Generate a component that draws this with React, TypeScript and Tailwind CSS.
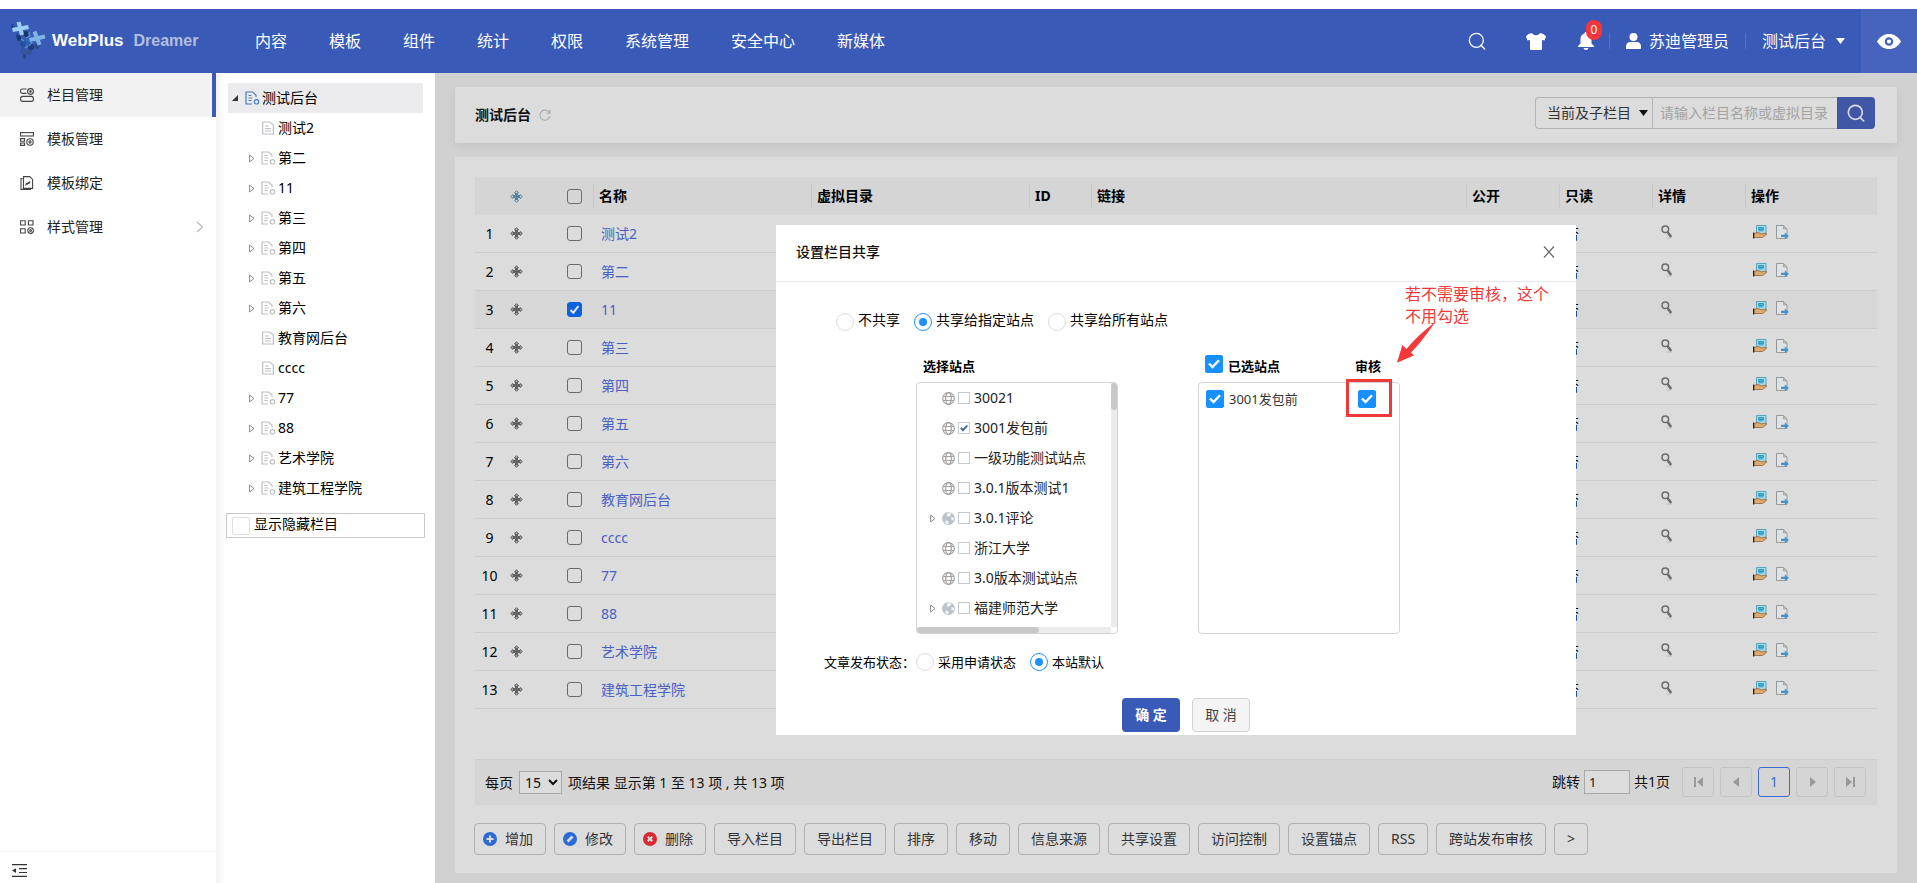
import React from 'react';

const navItems = ['内容', '模板', '组件', '统计', '权限', '系统管理', '安全中心', '新媒体'];

interface TreeItem {
  name: string;
  leaf?: boolean;
}

const columns: TreeItem[] = [
  { name: '测试2', leaf: true },
  { name: '第二' },
  { name: '11' },
  { name: '第三' },
  { name: '第四' },
  { name: '第五' },
  { name: '第六' },
  { name: '教育网后台', leaf: true },
  { name: 'cccc', leaf: true },
  { name: '77' },
  { name: '88' },
  { name: '艺术学院' },
  { name: '建筑工程学院' },
];

const sites = [
  { name: '30021' },
  { name: '3001发包前', checked: true },
  { name: '一级功能测试站点' },
  { name: '3.0.1版本测试1' },
  { name: '3.0.1评论', parent: true },
  { name: '浙江大学' },
  { name: '3.0版本测试站点' },
  { name: '福建师范大学', parent: true },
];

const actions = ['导入栏目', '导出栏目', '排序', '移动', '信息来源', '共享设置', '访问控制', '设置锚点', 'RSS', '跨站发布审核', '>'];

/* ---------- icons ---------- */

const Logo = () => (
  <svg width="36" height="40" viewBox="0 0 36 40" aria-hidden="true">
    <path d="M2 8l-1-4 3-1zM7 12l-1 4 4 1z" fill="#1c3f86" />
    <ellipse cx="9" cy="17" rx="2.200" ry="3.200" fill="#1b3a78" />
    <ellipse cx="16" cy="13" rx="2.500" ry="3" fill="#1a3568" />
    <ellipse cx="13" cy="23" rx="2.500" ry="3.500" fill="#23509a" />
    <ellipse cx="18" cy="20" rx="2.500" ry="3" fill="#2c63b4" />
    <ellipse cx="21" cy="26" rx="3" ry="3.200" fill="#1e3f7c" />
    <ellipse cx="27" cy="25" rx="2.500" ry="3" fill="#2b4c88" />
    <ellipse cx="13" cy="30" rx="2.500" ry="3" fill="#2f559d" />
    <ellipse cx="19" cy="31" rx="2.500" ry="2.600" fill="#36538f" />
    <ellipse cx="14.500" cy="35" rx="1.600" ry="2.500" fill="#31456f" />
    <path d="M19 11l1 4-4 2M11 18l3 2M22 21l-3 4M15 27l3-2" stroke="#5a94d8" strokeWidth="1.200" fill="none" />
    <path d="M2.500 9L18.500 6M8.500 1l3.500 13" stroke="#9fcef3" strokeWidth="4" />
    <path d="M19.500 19L35 15.500M24.500 10.500L29.500 24" stroke="#7fb4e6" strokeWidth="4" />
  </svg>
);

const SearchIcon = ({ size, width = 5 }: { size: number; width?: number }) => (
  <svg width={size} height={size} viewBox="0 0 54 54" fill="none" stroke="currentColor" strokeWidth={width} aria-hidden="true">
    <circle cx="25" cy="25" r="21" />
    <path d="M39 40l11 11" strokeLinecap="round" />
  </svg>
);

const ShirtIcon = () => (
  <svg width="20" height="17" viewBox="0 0 20 17" fill="currentColor" aria-hidden="true">
    <path d="M6 0c1 1.600 2.300 2.200 4 2.200S13 1.600 14 0c2.500.3 4.700 1.500 6 3.500L18.500 7.500 16 7v9q0 1-1 1H5q-1 0-1-1V7l-2.500.5L0 3.500C1.300 1.500 3.500.3 6 0z" />
  </svg>
);

const BellIcon = () => (
  <svg width="16" height="18" viewBox="0 0 16 18" fill="currentColor" aria-hidden="true">
    <path d="M8 0c1 0 1.500.6 1.500 1.500C12 2.200 13.500 4 13.500 7v4.500L16 14v1H0v-1l2.500-2.500V7c0-3 1.500-4.800 4-5.500C6.500.6 7 0 8 0z" />
    <path d="M5.500 16h5q-.5 2-2.500 2t-2.500-2z" />
  </svg>
);

const UserIcon = () => (
  <svg width="15" height="16" viewBox="0 0 15 16" fill="currentColor" aria-hidden="true">
    <circle cx="7.500" cy="4" r="4" />
    <path d="M0 16v-2.500C0 10.500 2 9 4 9h7c2 0 4 1.500 4 4.500V15q0 1-1 1z" />
  </svg>
);

const EyeIcon = () => (
  <svg width="24" height="15" viewBox="0 0 24 15" aria-hidden="true">
    <path d="M0 7.500C3 2.500 7 0 12 0s9 2.500 12 7.500C21 12.500 17 15 12 15S3 12.500 0 7.500z" fill="#fff" />
    <circle cx="12" cy="7.500" r="3.200" fill="none" stroke="#4664bd" strokeWidth="2.200" />
  </svg>
);

const Caret = ({ color }: { color: string }) => (
  <svg width="9" height="6" viewBox="0 0 9 6" fill={color} aria-hidden="true">
    <path d="M0 0h9L4.500 6z" />
  </svg>
);

const MenuIcon = ({ kind }: { kind: string }) => (
  <svg width="14" height="14" viewBox="0 0 14 14" fill="none" stroke="#444" strokeWidth="1.100" aria-hidden="true">
    {kind === 'column' && (
      <>
        <path d="M6.500 1H2.200C1.200 1 .6 1.600.6 2.600v1.200c0 1 .6 1.600 1.600 1.600h4.300" />
        <circle cx="10.500" cy="3.500" r="2.900" />
        <circle cx="10.500" cy="3.500" r=".7" fill="#444" />
        <rect x=".6" y="8.400" width="12.800" height="5" rx="2.200" />
      </>
    )}
    {kind === 'template' && (
      <>
        <rect x=".6" y=".6" width="12.800" height="3.400" />
        <path d="M.6 6.600h4v2.600h-4zM.6 11h4v2.400h-4z" />
        <circle cx="10" cy="10" r="3.200" />
        <circle cx="10" cy="10" r="1.100" />
      </>
    )}
    {kind === 'bind' && (
      <>
        <path d="M2.500 2.600H1v10.800h9.500v-1.200M3.500.6h6.200l2.900 2.800v9H3.500z" />
        <path d="M6.200 9.300c-1-1 .8-2.600 1.600-1.800M9.600 5.400c1 1-.8 2.600-1.600 1.800M6.800 8.700l2.300-2.800" />
      </>
    )}
    {kind === 'style' && (
      <>
        <path d="M.6.800h4.600v4.200H.6zM8.400.800H13v4.200H8.400zM.6 8.800h4.600V13H.6z" />
        <circle cx="10.600" cy="10.600" r="2.800" />
        <circle cx="10.600" cy="10.600" r=".9" />
      </>
    )}
  </svg>
);

const DocIcon = ({ leaf, color = '#bcc0c4' }: { leaf?: boolean; color?: string }) => (
  <svg width="15" height="14" viewBox="0 0 15 14" fill="none" stroke={color} strokeWidth="1.200" aria-hidden="true">
    {leaf ? (
      <path d="M1.600 1h7l3.800 3v9H1.600zM4 5h4M4 7.500h6M4 10h6" />
    ) : (
      <>
        <path d="M7 13H1V1h6.500L11 4v2M3.500 4.500h3M3.500 7h4M3.500 9.500h3" />
        <circle cx="11.500" cy="10.800" r="2.200" />
      </>
    )}
  </svg>
);

const Arrow = () => (
  <svg width="6" height="9" viewBox="0 0 6 9" fill="none" stroke="#8d8d8d" aria-hidden="true">
    <path d="M.6 1v7l4.400-3.500z" />
  </svg>
);

const MoveIcon = ({ color, fill = 'none' }: { color: string; fill?: string }) => (
  <svg className="mx-auto" width="13" height="13" viewBox="0 0 13 13" fill={fill} stroke={color} strokeWidth="1" aria-hidden="true">
    <path d="M6.500.7l2 2.100h-1v2.700h2.700v-1l2.100 2-2.100 2v-1H7.500v2.700h1l-2 2.100-2-2.100h1V7.500H2.800v1l-2.100-2 2.100-2v1h2.700V2.800h-1z" />
    <path d="M6.500 3v7M3 6.500h7" />
  </svg>
);

const MagnifierIcon = () => (
  <svg width="12" height="14" viewBox="0 0 12 14" fill="none" aria-hidden="true">
    <path d="M5 13h6" stroke="#c2c2c2" />
    <circle cx="4.300" cy="4.300" r="3.300" stroke="#6a6a6a" strokeWidth="1.500" />
    <path d="M6.800 7.500l3.400 4.500" stroke="#6a6a6a" strokeWidth="2.500" />
  </svg>
);

const ShareIcon = () => (
  <svg width="14" height="14" viewBox="0 0 14 14" aria-hidden="true">
    <path d="M3.500.5h9.500v9H3.500z" fill="#a8dbe8" stroke="#56a3ba" />
    <path d="M5.500 2.500h5v2h-5zM5.500 5.800h5" stroke="#2f9ac0" fill="#52b4d2" />
    <path d="M1 8.500l4-1 4 1.500 4-1 .5 1.500-4 3H1z" fill="#dbab75" stroke="#99602f" strokeWidth=".8" />
    <path d="M.6 7.500v6" stroke="#222" strokeWidth="1.200" />
  </svg>
);

const ExportIcon = () => (
  <svg width="13" height="14" viewBox="0 0 13 14" aria-hidden="true">
    <path d="M.5.5h7L11 4v9.500H.5z" fill="#dfe3e6" stroke="#94989b" />
    <path d="M7.500.5V4H11z" fill="#cbbfb2" stroke="#94989b" strokeWidth=".7" />
    <path d="M5 9.700h3.800V7.600L12.800 11l-4 3v-2H5z" fill="#4690c8" />
  </svg>
);

const GlobeIcon = ({ parent }: { parent?: boolean }) => (
  <svg width="13" height="13" viewBox="0 0 13 13" fill="none" stroke="#a2a2a2" strokeWidth="1.200" aria-hidden="true">
    {parent ? (
      <>
        <circle cx="6.500" cy="6.500" r="6.400" fill="#b9c3cc" stroke="none" />
        <path d="M6 .3l3.500.8-1 2.400L6 5 4.500 3.500zM9 5l3.500 1-1 2.500L9.500 8zM3 8.500l3 .5 1 2-1.500 1.500L3.500 11z" fill="#f1f4f6" stroke="none" />
      </>
    ) : (
      <>
        <circle cx="6.500" cy="6.500" r="5.800" />
        <ellipse cx="6.500" cy="6.500" rx="2.800" ry="5.800" />
        <path d="M1.200 4.500h10.600M1.200 8.500h10.600" />
      </>
    )}
  </svg>
);

const Dot = ({ kind }: { kind: string }) => (
  <svg width="14" height="14" viewBox="0 0 14 14" aria-hidden="true">
    <circle cx="7" cy="7" r="7" fill={kind === 'del' ? '#d62b33' : '#2a6bd6'} />
    {kind === 'add' && <path d="M7 3.500v7M3.500 7h7" stroke="#dcdcdc" strokeWidth="2" />}
    {kind === 'edit' && <path d="M4.500 9.500l5-5" stroke="#dcdcdc" strokeWidth="2.600" />}
    {kind === 'del' && <path d="M4.700 4.700l4.600 4.600M9.300 4.700L4.700 9.300" stroke="#dcdcdc" strokeWidth="2" />}
  </svg>
);

/* ---------- form bits ---------- */

interface CheckProps {
  label: string;
  checked?: boolean;
}

const RowCheck: React.FC<CheckProps> = ({ label, checked }) => (
  <label className="mx-auto grid size-[15px] place-items-center">
    <input
      type="checkbox"
      aria-label={label}
      defaultChecked={checked}
      className="peer col-start-1 row-start-1 size-[15px] appearance-none rounded-[3px] border border-[#6b6b6b] checked:border-[#0a62dc] checked:bg-[#0a62dc]"
    />
    <svg className="pointer-events-none invisible col-start-1 row-start-1 peer-checked:visible" width="11" height="11" viewBox="0 0 11 11" fill="none" stroke="#e6e6e6" strokeWidth="2">
      <path d="M1.500 6l2.800 2.700L9.500 2" />
    </svg>
  </label>
);

const BlueCheck: React.FC<CheckProps> = ({ label, checked }) => (
  <label className="grid size-[18px] shrink-0 place-items-center">
    <input
      type="checkbox"
      aria-label={label}
      defaultChecked={checked}
      className="peer col-start-1 row-start-1 size-[18px] appearance-none rounded-xs border border-[#dcdcdc] bg-white checked:border-[#1890ff] checked:bg-[#1890ff]"
    />
    <svg className="pointer-events-none invisible col-start-1 row-start-1 peer-checked:visible" width="12" height="10" viewBox="0 0 12 10" fill="none" stroke="#fff" strokeWidth="2.400">
      <path d="M1 4.500l3.500 3.600L11 1.200" />
    </svg>
  </label>
);

const Radio = ({ name, text, checked }: { name: string; text: string; checked?: boolean }) => (
  <label className="flex items-center gap-1">
    <input
      type="radio"
      name={name}
      defaultChecked={checked}
      className="grid size-[18px] appearance-none place-content-center rounded-full border border-[#dcdcdc] before:size-2 before:rounded-full checked:border-[#1e90ff] checked:before:bg-[#1e90ff]"
    />
    <span className="-mt-1">{text}</span>
  </label>
);

/* ---------- page parts ---------- */

const TopBar = () => (
  <header className="flex h-16 items-center bg-[#3a5ab8] text-base text-white">
    <a href="#" className="flex w-[255px] shrink-0 items-center pl-2.5 font-['Liberation_Sans',sans-serif] font-bold">
      <Logo />
      <span className="ml-1.5 text-[17px]">WebPlus</span>
      <span className="ml-2.5 text-base text-[#b3bfdf]">Dreamer</span>
    </a>
    <nav className="flex grow gap-[42px]">
      {navItems.map((item) => (
        <a key={item} href="#" className="whitespace-nowrap">{item}</a>
      ))}
    </nav>
    <button aria-label="搜索" className="mr-10"><SearchIcon size={18} width={4} /></button>
    <button aria-label="皮肤" className="mr-8"><ShirtIcon /></button>
    <button aria-label="消息" className="relative mr-[15px]">
      <BellIcon />
      <span className="absolute -top-3 left-2 h-5 w-4 rounded-full bg-[#f5373b] text-center text-xs leading-5">0</span>
    </button>
    <span className="h-4 w-px bg-[#5471c6]" />
    <a href="#" className="mx-4 flex items-center gap-2 whitespace-nowrap"><UserIcon />苏迪管理员</a>
    <span className="h-4 w-px bg-[#5471c6]" />
    <button className="mx-4 flex items-center gap-2.5 whitespace-nowrap">测试后台<Caret color="#fff" /></button>
    <button aria-label="预览" className="flex h-16 w-14 shrink-0 items-center justify-center bg-[#4664bd]"><EyeIcon /></button>
  </header>
);

const SideMenu = () => {
  const items = [
    { text: '栏目管理', kind: 'column' },
    { text: '模板管理', kind: 'template' },
    { text: '模板绑定', kind: 'bind' },
    { text: '样式管理', kind: 'style' },
  ];
  return (
    <aside className="flex w-[216px] shrink-0 flex-col bg-white">
      <nav className="grow">
        {items.map((item, i) => (
          <a
            key={item.kind}
            href="#"
            className={`flex h-11 items-center gap-[13px] pl-5 text-[#222] ${i === 0 ? 'border-r-4 border-[#3a5ab8] bg-[#f2f2f2]' : 'pr-3'}`}
          >
            <MenuIcon kind={item.kind} />
            <span className="grow">{item.text}</span>
            {item.kind === 'style' && (
              <svg width="8" height="12" viewBox="0 0 8 12" fill="none" stroke="#bbb" strokeWidth="1.300"><path d="M1 1l5.500 5L1 11" /></svg>
            )}
          </a>
        ))}
      </nav>
      <div className="flex h-8 items-center border-t border-[#f2f2f2] pl-3 pt-1.5">
        <button aria-label="收起菜单">
          <svg width="15" height="13" viewBox="0 0 15 13" fill="none" stroke="#333" strokeWidth="1.200">
            <path d="M0 .7h15M7 4.700h8M7 8.500h8M0 12.300h15" />
            <path d="M0 6.600l4-2.300v4.600z" fill="#333" stroke="none" />
          </svg>
        </button>
      </div>
    </aside>
  );
};

const ColumnTree = () => (
  <section className="w-[219px] shrink-0 bg-linear-to-r from-[#f3f3f3] to-white to-4% pt-2.5 text-black">
    <ul className="mx-3">
      <li>
        <a href="#" className="flex h-[30px] items-center bg-[#ebebed] pl-1">
          <svg className="mr-[7px]" width="6" height="6" viewBox="0 0 6 6"><path d="M6 0v6H0z" fill="#333" /></svg>
          <DocIcon color="#4a7db5" />
          <span className="ml-0.5">测试后台</span>
        </a>
      </li>
      {columns.map((c) => (
        <li key={c.name}>
          <a href="#" className="flex h-[30px] items-center pl-[21px]">
            <span className="w-3">{!c.leaf && <Arrow />}</span>
            <DocIcon leaf={c.leaf} />
            <span className="ml-0.5">{c.name}</span>
          </a>
        </li>
      ))}
    </ul>
    <label className="mx-2.5 mt-2.5 flex h-[25px] items-center gap-1 border border-[#c9c9c9] pl-[5px]">
      <input type="checkbox" className="size-[18px] appearance-none rounded-xs border border-[#dedede]" />
      <span className="-mt-1">显示隐藏栏目</span>
    </label>
  </section>
);

const SearchBar = () => (
  <section className="flex h-14 items-center bg-[#dcdcdc] pl-5 pr-[22px] shadow-[0_3px_8px_rgba(0,0,0,0.07)]">
    <h1 className="font-bold text-[#111]">测试后台</h1>
    <button aria-label="刷新" className="ml-2">
      <svg width="12" height="12" viewBox="0 0 12 12" fill="none" stroke="#aaa" strokeWidth="1.100">
        <path d="M10.500 4A5 5 0 1 0 10.800 7.500M11 .8v3.500H7.500" />
      </svg>
    </button>
    <form className="-mt-1 ml-auto flex h-8">
      <div className="grid w-[117px] items-center rounded-l border border-r-0 border-[#b3b3b3]">
        <select aria-label="搜索范围" className="col-start-1 row-start-1 h-full appearance-none pl-[11px] text-[#333]">
          <option>当前及子栏目</option>
        </select>
        <span className="pointer-events-none col-start-1 row-start-1 justify-self-end pr-1"><Caret color="#111" /></span>
      </div>
      <input
        aria-label="关键字"
        placeholder="请输入栏目名称或虚拟目录"
        className="w-[185px] border border-r-0 border-[#b3b3b3] px-[7px] placeholder:text-[#a3a3a3]"
      />
      <button type="button" aria-label="搜索" className="flex w-[38px] items-center justify-center rounded-r bg-[#3f57a5] text-[#d8dcea]">
        <SearchIcon size={18} />
      </button>
    </form>
  </section>
);

const HeadCell = ({ text }: { text: string }) => (
  <th className="p-0 text-left font-bold">
    <div className="flex h-6 items-center border-l border-[#c8c8c8] pl-[5px]">{text}</div>
  </th>
);

const ColumnTable = () => (
  <table className="w-full table-fixed border-separate border-spacing-0 text-black">
    <colgroup>
      <col className="w-[29px]" />
      <col className="w-6" />
      <col className="w-7" />
      <col className="w-[37px]" />
      <col className="w-[218px]" />
      <col className="w-[218px]" />
      <col className="w-[62px]" />
      <col />
      <col className="w-[93px]" />
      <col className="w-[93px]" />
      <col className="w-[93px]" />
      <col className="w-[132px]" />
    </colgroup>
    <thead>
      <tr className="h-[38px] bg-[#d5d5d5]">
        <th className="p-0" />
        <th className="p-0"><MoveIcon color="#55809c" fill="#dcdcdc" /></th>
        <th className="p-0" />
        <th className="p-0"><RowCheck label="全选" /></th>
        {['名称', '虚拟目录', 'ID', '链接', '公开', '只读', '详情', '操作'].map((h) => (
          <HeadCell key={h} text={h} />
        ))}
      </tr>
    </thead>
    <tbody>
      {columns.map((c, i) => (
        <tr
          key={c.name}
          className={`[&>td]:h-[38px] [&>td]:border-b [&>td]:border-[#cdcdcd] [&>td]:p-0 ${i === 2 ? 'bg-[#d7d7d7]' : ''}`}
        >
          <td className="text-center">{i + 1}</td>
          <td><MoveIcon color="#606060" fill="#a8a8a8" /></td>
          <td />
          <td><RowCheck label={c.name} checked={i === 2} /></td>
          <td><a href="#" className="ml-2 text-[#4a60c2]">{c.name}</a></td>
          <td />
          <td />
          <td />
          <td />
          <td><span className="ml-1.5">否</span></td>
          <td>
            <button aria-label="详情" className="-mt-1 ml-[9px] block"><MagnifierIcon /></button>
          </td>
          <td>
            <div className="-mt-1 ml-2 flex gap-[9px]">
              <button aria-label="共享"><ShareIcon /></button>
              <button aria-label="导出"><ExportIcon /></button>
            </div>
          </td>
        </tr>
      ))}
    </tbody>
  </table>
);

const pagerIcons = ['M1 0h2v10H1zM10 0v10L4 5z', 'M8 0v10L2 5z', '', 'M3 0v10l6-5z', 'M8 0h2v10H8zM1 0v10l6-5z'];
const pagerLabels = ['首页', '上一页', '1', '下一页', '末页'];

const Pager = () => (
  <div className="mt-[50px] flex h-[46px] items-center border-t border-[#cfcfcf] bg-[#d5d5d5] pl-2.5 pr-[11px] text-[#111]">
    <span>每页</span>
    <select aria-label="每页条数" className="mx-1.5 h-[23px] w-[43px] border border-[#a8a8a8] bg-[#dcdcdc] pl-px">
      <option>15</option>
    </select>
    <span>项结果 显示第 1 至 13 项 , 共 13 项</span>
    <div className="-mt-0.5 ml-auto flex items-center">
      <label className="flex items-center gap-1">
        跳转
        <input defaultValue="1" className="h-6 w-[46px] border border-[#a8a8a8] bg-[#dcdcdc] pl-1 text-[13px]" />
      </label>
      <span className="ml-1 mr-3">共1页</span>
      <div className="flex gap-1.5">
        {pagerLabels.map((label, i) => (
          <button
            key={label}
            aria-label={label}
            className={`flex h-[30px] w-8 items-center justify-center rounded-[3px] border ${i === 2 ? 'border-[#3a6bd0] text-[#3a6bd0]' : 'border-[#c4c4c4]'}`}
          >
            {i === 2 ? '1' : <svg width="11" height="10" viewBox="0 0 11 10" fill="#999"><path d={pagerIcons[i]} /></svg>}
          </button>
        ))}
      </div>
    </div>
  </div>
);

const Toolbar = () => {
  const btn = 'flex h-8 items-center rounded border border-[#b0b0b0] text-[#333]';
  return (
    <div className="-ml-px mt-[18px] flex gap-2 whitespace-nowrap">
      <button className={`${btn} gap-2 pl-2 pr-3`}><Dot kind="add" />增加</button>
      <button className={`${btn} gap-2 pl-2 pr-3`}><Dot kind="edit" />修改</button>
      <button className={`${btn} gap-2 pl-2 pr-3`}><Dot kind="del" />删除</button>
      {actions.map((a) => (
        <button key={a} className={`${btn} px-3`}>{a}</button>
      ))}
    </div>
  );
};

const ShareDialog = () => (
  <div role="dialog" aria-label="设置栏目共享" className="relative w-[800px] bg-white text-black">
    <div className="flex h-[57px] items-center justify-between border-b border-[#e8e8e8] px-5 pb-0.5">
      <h2 className="font-medium text-[#111]">设置栏目共享</h2>
      <button aria-label="关闭">
        <svg width="14" height="12" viewBox="0 0 14 12" fill="none" stroke="#666" strokeWidth="1.200"><path d="M2 .5l10 11M12 .5L2 11.500" /></svg>
      </button>
    </div>

    <div className="flex gap-3.5 pl-[60px] pt-[31px]">
      <Radio name="share" text="不共享" />
      <Radio name="share" text="共享给指定站点" checked />
      <Radio name="share" text="共享给所有站点" />
    </div>

    <div className="mt-6 flex gap-20 pl-[140px]">
      <div className="w-[202px]">
        <h3 className="flex h-[27px] items-start pl-[7px] text-[13px] font-bold leading-[22px]">选择站点</h3>
        <div className="overflow-hidden rounded border border-[#d4d4d4]">
          <div className="flex">
            <ul className="h-[244px] grow whitespace-nowrap">
              {sites.map((s) => (
                <li key={s.name} className="flex h-[30px] items-center pl-[13px] text-[#222]">
                  <span className="w-3">{s.parent && <Arrow />}</span>
                  <GlobeIcon parent={s.parent} />
                  <label className="ml-[3px] flex items-center gap-1">
                    <span className="grid place-items-center">
                      <input
                        type="checkbox"
                        defaultChecked={s.checked}
                        className="peer col-start-1 row-start-1 size-3 appearance-none border border-[#c3cad0]"
                      />
                      <svg className="invisible col-start-1 row-start-1 peer-checked:visible" width="8" height="8" viewBox="0 0 8 8" fill="none" stroke="#36648f" strokeWidth="1.800">
                        <path d="M.8 3.800l2.200 2.400L7.300 1.500" />
                      </svg>
                    </span>
                    {s.name}
                  </label>
                </li>
              ))}
            </ul>
            <div className="w-1.5 bg-[#ebebeb]"><div className="h-[27px] rounded-full bg-[#c8c8c8]" /></div>
          </div>
          <div className="mr-1.5 h-1.5 bg-[#ebebeb]"><div className="h-full w-[122px] rounded-full bg-[#c8c8c8]" /></div>
        </div>
      </div>

      <div className="relative flex w-[202px] flex-col">
        <div className="flex h-[27px] items-start gap-[5px] pl-[7px] pr-[19px] text-[13px] font-bold leading-[22px]">
          <BlueCheck label="全选已选站点" checked />
          <h3 className="grow">已选站点</h3>
          <h3>审核</h3>
        </div>
        <div className="grow rounded border border-[#d4d4d4] pl-[7px] pr-[23px] pt-[7px]">
          <div className="flex items-center gap-[5px] text-[13px] text-[#333]">
            <BlueCheck label="3001发包前" checked />
            <span className="grow">3001发包前</span>
            <BlueCheck label="审核" checked />
          </div>
        </div>
        <div className="pointer-events-none absolute right-2 top-6 h-[38px] w-[46px] border-3 border-[#f03a3a]" />
      </div>
    </div>

    <div className="mt-[19px] flex items-center gap-px pl-12 text-[13px]">
      <span>文章发布状态：</span>
      <div className="flex gap-[14px] [&_span]:mt-0">
        <Radio name="state" text="采用申请状态" />
        <Radio name="state" text="本站默认" checked />
      </div>
    </div>

    <div className="mt-[26px] flex justify-center gap-3 pb-[3px] pl-5">
      <button className="h-[34px] w-[58px] rounded bg-[#3a5ab8] font-bold text-white">确 定</button>
      <button className="h-[34px] w-[58px] rounded border border-[#d2d2d2] bg-[#f4f4f4] text-[#444]">取 消</button>
    </div>

    {/* reviewer note */}
    <p className="absolute left-[629px] top-[58px] w-[150px] text-base leading-[22px] text-[#f03a3a]">若不需要审核，这个不用勾选</p>
    <svg className="absolute left-[621px] top-[97px]" width="38" height="41" viewBox="0 0 113 121" fill="#f5393b">
      <path d="M113 0Q80 50 42 90L50 99 0 121 16 68 28 80Q65 35 113 0z" />
    </svg>
  </div>
);

const App: React.FC = () => {
  return (
    <div className="flex min-h-screen flex-col bg-white pt-[9px] font-['Noto_Sans','Noto_Sans_CJK_SC',sans-serif] text-sm">
      <TopBar />
      <div className="flex grow">
        <SideMenu />
        <ColumnTree />
        <main className="relative min-w-0 grow bg-[#d1d1d1] pb-2.5 pl-5 pr-5 pt-3.5">
          <SearchBar />
          <section className="mt-3.5 bg-[#dcdcdc] px-5 pb-[18px] pt-5">
            <ColumnTable />
            <Pager />
            <Toolbar />
          </section>
          <div className="absolute inset-x-0 top-[152px] flex justify-center">
            <ShareDialog />
          </div>
        </main>
      </div>
    </div>
  );
};

export default App;
